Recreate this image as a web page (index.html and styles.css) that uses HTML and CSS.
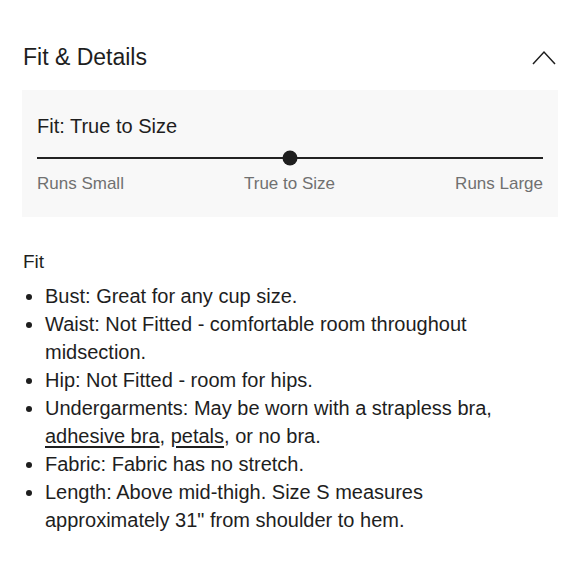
FILE: index.html
```html
<!DOCTYPE html>
<html>
<head>
<meta charset="utf-8">
<link rel="stylesheet" href="styles.css">
</head>
<body>
<section class="panel">
  <header class="head">
    <h2 class="title">Fit &amp; Details</h2>
    <svg class="chev" width="24" height="15" viewBox="0 0 24 15"><path d="M1 14 L12 2 L23 14" fill="none" stroke="#1e1e1e" stroke-width="1.5"/></svg>
  </header>
  <div class="fitbox">
    <div class="fit-title">Fit: True to Size</div>
    <div class="track"><span class="knob"></span></div>
    <div class="labels"><span>Runs Small</span><span>True to Size</span><span>Runs Large</span></div>
  </div>
  <div class="sub">Fit</div>
  <ul class="list">
    <li>Bust: Great for any cup size.</li>
    <li>Waist: Not Fitted - comfortable room throughout midsection.</li>
    <li>Hip: Not Fitted - room for hips.</li>
    <li>Undergarments: May be worn with a strapless bra, <a href="#">adhesive bra</a>, <a href="#">petals</a>, or no bra.</li>
    <li>Fabric: Fabric has no stretch.</li>
    <li>Length: Above mid-thigh. Size S measures approximately 31" from shoulder to hem.</li>
  </ul>
</section>
</body>
</html>
```
FILE: styles.css
```css
html, body { margin: 0; padding: 0; background: #fff; }
body { font-family: "Liberation Sans", Arial, sans-serif; color: #1e1e1e; }
.panel { padding: 43px 22px 0 22px; }
.head { display: flex; justify-content: space-between; align-items: center; padding-left: 1px; height: 28px; }
.title { margin: 0; font-weight: 400; font-size: 23px; line-height: 28px; }
.chev { margin-right: 2px; }
.fitbox { background: #f8f8f8; margin-top: 19px; height: 127px; padding: 24px 15px 0 15px; box-sizing: border-box; }
.fit-title { font-size: 20px; line-height: 24px; }
.track { position: relative; height: 2px; background: #222; margin-top: 19px; }
.knob { position: absolute; left: 50%; top: 1px; width: 15px; height: 15px; border-radius: 50%; background: #1e1e1e; transform: translate(-50%, -50%); }
.labels { display: flex; justify-content: space-between; margin-top: 14px; font-size: 17px; line-height: 22px; color: #707070; }
.sub { font-size: 19px; line-height: 28px; margin-top: 31px; padding-left: 1px; }
.list { margin: 6px 0 0 0; padding-left: 23px; max-width: 485px; font-size: 20px; line-height: 28px; }
.list a { color: #1e1e1e; text-decoration: underline; text-underline-offset: 3px; }
```
